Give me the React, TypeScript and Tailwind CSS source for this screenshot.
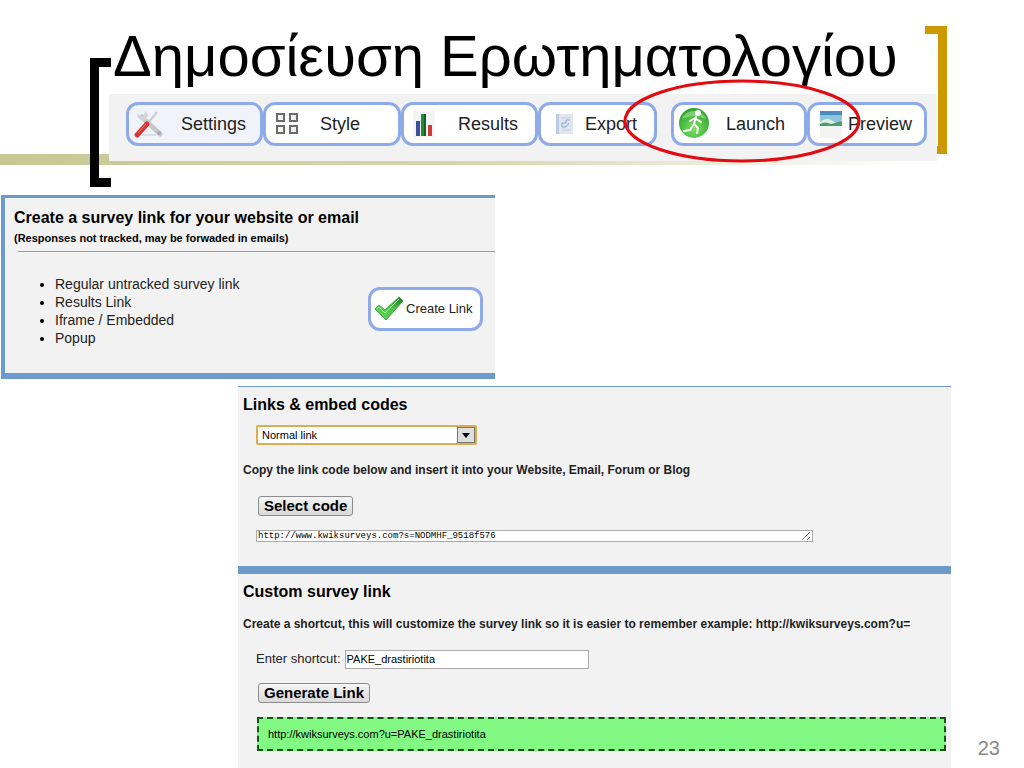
import type { ReactNode } from "react";

const tabs = [
  { label: "Settings", icon: <ToolsIcon />, className: "w-[137px] pl-1 gap-4 bg-[#f0f4fa]" },
  { label: "Style", icon: <GridIcon />, className: "w-[138px] pl-2 gap-5 bg-white" },
  { label: "Results", icon: <ChartIcon />, className: "w-[137px] pl-2 gap-5 bg-white" },
  { label: "Export", icon: <SheetIcon />, className: "w-[119px] pl-3 gap-2 bg-white" },
  { label: "Launch", icon: <RunnerIcon />, className: "ml-[14px] w-[136px] pl-1 gap-4 bg-white" },
  { label: "Preview", icon: <PictureIcon />, className: "w-[120px] pl-2 gap-1 bg-white" },
];

const linkTypes = ["Regular untracked survey link", "Results Link", "Iframe / Embedded", "Popup"];

function ToolsIcon() {
  return (
    <svg width="32" height="30" viewBox="0 0 32 30" className="shrink-0">
      <path d="M9 26 L23 26" stroke="#dcdfe3" strokeWidth="2" />
      <path d="M24 3 L15 14" stroke="#c9ccd0" strokeWidth="2" />
      <path d="M9 8 L27 25" stroke="#c6c8cb" strokeWidth="5" strokeLinecap="round" />
      <path d="M4 4 L5 9 L9 12 L14 10 L15 5 L12 2 L11 7 L8 8 Z" fill="#d3d5d8" />
      <circle cx="26" cy="24" r="2" fill="#a9abae" />
      <path d="M14 15 L4 26" stroke="#d8342f" strokeWidth="5" strokeLinecap="round" />
      <path d="M13 15 L5 24" stroke="#ee8078" strokeWidth="1" />
    </svg>
  );
}

function GridIcon() {
  return (
    <svg width="26" height="24" viewBox="0 0 26 24" className="shrink-0" fill="#f3f3f3" stroke="#6b6b6b" strokeWidth="2">
      <rect x="3" y="2" width="7" height="7" />
      <rect x="16" y="2" width="7" height="7" />
      <rect x="3" y="14" width="7" height="7" />
      <rect x="16" y="14" width="7" height="7" />
    </svg>
  );
}

function ChartIcon() {
  return (
    <svg width="26" height="28" viewBox="0 0 26 28" className="shrink-0">
      <rect x="1" y="1" width="22" height="26" fill="#f3f4f6" />
      <rect x="4" y="11" width="4" height="15" fill="#3c4f9c" />
      <rect x="9" y="4" width="5" height="22" fill="#1c8f35" />
      <rect x="12" y="4" width="2" height="22" fill="#14602a" />
      <rect x="16" y="15" width="4" height="11" fill="#cf3a36" />
    </svg>
  );
}

function SheetIcon() {
  return (
    <svg width="24" height="24" viewBox="0 0 24 24" className="shrink-0">
      <rect x="3" y="2" width="17" height="20" fill="#dfe6f0" />
      <rect x="3" y="2" width="3" height="20" fill="#b9cbe4" />
      <path d="M8 6 H18 M8 18 H18" stroke="#c5cedb" strokeWidth="1" />
      <path d="M9 15 V11 H13 V8 H17 M9 15 H13 L16 11" stroke="#8fa6c9" strokeWidth="1" fill="none" />
    </svg>
  );
}

function RunnerIcon() {
  return (
    <svg width="32" height="32" viewBox="0 0 32 32" className="shrink-0">
      <defs>
        <radialGradient id="launch" cx="50%" cy="70%" r="65%">
          <stop offset="0" stopColor="#7ee064" />
          <stop offset="1" stopColor="#2fa52f" />
        </radialGradient>
      </defs>
      <circle cx="16" cy="15" r="15" fill="url(#launch)" />
      <path d="M4 11 A13 13 0 0 1 28 11 Q16 5 4 11 Z" fill="#a5e596" opacity="0.6" />
      <circle cx="20" cy="5" r="3" fill="#fff" />
      <path d="M18 9 L16 16 L20 20 L19 25 M16 16 L12 22 L6 23 M17 10 L12 13 M18 11 L23 14" stroke="#fff" strokeWidth="2" strokeLinecap="round" strokeLinejoin="round" fill="none" />
    </svg>
  );
}

function PictureIcon() {
  return (
    <svg width="26" height="30" viewBox="0 0 26 30" className="shrink-0">
      <rect x="2" y="2" width="22" height="27" fill="#f4f4f5" />
      <rect x="2" y="2" width="22" height="15" fill="#8fc3dc" />
      <rect x="2" y="2" width="22" height="4" fill="#4d8dbd" />
      <path d="M2 13 Q9 7 15 12 T24 10 V17 H2 Z" fill="#d9efdf" />
      <path d="M2 15 Q7 12 13 15 L24 12 V17 H2 Z" fill="#4f9c67" />
    </svg>
  );
}

function CheckIcon() {
  return (
    <svg width="30" height="26" viewBox="0 0 30 26" className="shrink-0">
      <defs>
        <linearGradient id="check" x1="0" y1="1" x2="1" y2="0">
          <stop offset="0" stopColor="#63da5c" />
          <stop offset="0.6" stopColor="#4cc04a" />
          <stop offset="1" stopColor="#1c6a22" />
        </linearGradient>
      </defs>
      <path d="M1 13 L5 9 L11 14 L25 1 L29 5 L12 24 Z" fill="url(#check)" stroke="#3fa443" strokeWidth="1" strokeLinejoin="round" />
      <path d="M3 13 L5 11 L11 17 L25 3" stroke="#a6ee9c" strokeWidth="1" fill="none" />
    </svg>
  );
}

function GrayButton({ children }: { children: ReactNode }) {
  return (
    <button
      type="button"
      className="h-5 rounded-[3px] border border-[#8c8c8c] bg-linear-to-b from-[#f6f6f6] to-[#d9d9d9] px-[5px] text-[15px] leading-4 font-bold"
    >
      {children}
    </button>
  );
}

function Toolbar() {
  return (
    <nav className="relative mt-[6px] mr-[87px] ml-[109px] flex h-[67px] bg-[#f2f2f2] pt-2 pl-[17px]">
      {tabs.map((tab) => (
        <button
          key={tab.label}
          type="button"
          className={`flex h-11 shrink-0 items-center rounded-xl border-3 border-[#8eaae8] text-[18px] text-[#222] ${tab.className}`}
        >
          {tab.icon}
          {tab.label}
        </button>
      ))}
      {/* highlight ring around Launch */}
      <svg width="238" height="86" viewBox="0 0 238 86" className="pointer-events-none absolute -top-4 left-[514px]">
        <ellipse cx="119" cy="43" rx="117" ry="40" fill="none" stroke="#e30a10" strokeWidth="3" />
      </svg>
    </nav>
  );
}

function SlideHeader() {
  return (
    <header className="relative pt-6">
      <div className="absolute top-[154px] left-0 h-[11px] w-[90%] bg-linear-to-r from-[#c8c893] via-[#d6d6ae] to-white" />
      <div className="absolute top-[58px] left-[90px] h-[129px] w-[21px] border-y-9 border-l-9 border-black" />
      <div className="absolute top-[26px] right-[77px] h-[128px] w-[22px] border-y-8 border-r-9 border-[#cc9900]" />
      <h1 className="relative pl-[113px] text-[58px] leading-[64px] whitespace-nowrap">Δημοσίευση Ερωτηματολογίου</h1>
      <Toolbar />
    </header>
  );
}

function CreateLinkPanel() {
  return (
    <section className="mt-[34px] ml-px w-[494px] border-t-3 border-b-6 border-l-4 border-[#6b9acb] bg-[#f2f2f2] pt-[10px] pb-[26px] pl-[9px]">
      <h2 className="text-[16px] leading-5 font-bold">Create a survey link for your website or email</h2>
      <p className="text-[11px] leading-5 font-bold">(Responses not tracked, may be forwaded in emails)</p>
      <hr className="mt-[3px] ml-1 border-[#999]" />
      <div className="mt-[23px] flex items-start justify-between pr-3">
        <ul className="list-disc pl-[41px] text-[14px] leading-[18px] text-[#222] marker:text-black">
          {linkTypes.map((type) => (
            <li key={type}>{type}</li>
          ))}
        </ul>
        <button
          type="button"
          className="mt-3 flex h-11 w-[115px] items-center gap-[2px] rounded-xl border-3 border-[#8eaae8] bg-white pl-[3px] text-[13px] whitespace-nowrap text-[#222]"
        >
          <CheckIcon />
          Create Link
        </button>
      </div>
    </section>
  );
}

function EmbedCodes() {
  return (
    <div className="border-t border-[#6b9acb] pt-2 pb-6 pl-[5px]">
      <h2 className="text-[16px] leading-5 font-bold">Links &amp; embed codes</h2>
      <div className="relative mt-[10px] ml-[13px] w-[221px]">
        <select
          aria-label="Link type"
          className="block h-5 w-full appearance-none rounded-xs border-2 border-[#dcae50] bg-white pl-1 text-[11px] leading-4"
        >
          <option>Normal link</option>
        </select>
        <span className="pointer-events-none absolute top-[2px] right-[2px] flex h-4 w-[18px] items-center justify-center border border-[#777] bg-[#dedede]">
          <svg width="8" height="5" viewBox="0 0 8 5">
            <path d="M0 0 H8 L4 5 Z" />
          </svg>
        </span>
      </div>
      <p className="mt-[15px] text-[12px] leading-5 font-bold text-[#222]">
        Copy the link code below and insert it into your Website, Email, Forum or Blog
      </p>
      <div className="mt-4 ml-[15px] flex">
        <GrayButton>Select code</GrayButton>
      </div>
      <div className="relative mt-[14px] ml-[13px] w-[557px]">
        <textarea
          aria-label="Link code"
          rows={1}
          defaultValue="http://www.kwiksurveys.com?s=NODMHF_9518f576"
          className="block h-3 w-full resize-none overflow-hidden border border-[#aaa] bg-white pl-px font-['Liberation_Mono',monospace] text-[9px] leading-[10px]"
        />
        <svg width="9" height="9" viewBox="0 0 9 9" className="pointer-events-none absolute right-[2px] bottom-[2px]">
          <path d="M0 9 L8 1 M5 9 L8 6" stroke="#777" strokeWidth="1" />
        </svg>
      </div>
    </div>
  );
}

function CustomLink() {
  return (
    <div className="border-t-8 border-[#6b9acb] pt-2 pb-[19px] pl-[5px]">
      <h2 className="text-[16px] leading-5 font-bold">Custom survey link</h2>
      <p className="mt-3 overflow-hidden text-[12px] leading-5 font-bold whitespace-nowrap text-[#222]">
        Create a shortcut, this will customize the survey link so it is easier to remember example: http://kwiksurveys.com?u=
      </p>
      <div className="mt-[15px] ml-[13px] flex items-center gap-1">
        <label htmlFor="shortcut" className="text-[13px] leading-5 text-[#222]">
          Enter shortcut:
        </label>
        <input
          id="shortcut"
          defaultValue="PAKE_drastiriotita"
          className="h-[19px] w-[244px] border border-[#aaa] bg-white px-px text-[11px]"
        />
      </div>
      <div className="mt-[14px] ml-[15px] flex">
        <GrayButton>Generate Link</GrayButton>
      </div>
      <p className="mt-[14px] mr-[5px] ml-[14px] border-2 border-dashed border-[#17521a] bg-[#82f982] py-[5px] pl-[9px] text-[11px] leading-5">
        http://kwiksurveys.com?u=PAKE_drastiriotita
      </p>
    </div>
  );
}

export default function App() {
  return (
    <main className="flex min-h-screen flex-col overflow-hidden bg-white font-['Liberation_Sans',Arial,sans-serif] text-black">
      <SlideHeader />
      <CreateLinkPanel />
      <div className="mt-[7px] flex grow">
        <section className="ml-[238px] min-w-0 grow bg-[#f2f2f2]">
          <EmbedCodes />
          <CustomLink />
        </section>
        <footer className="w-[73px] shrink-0 self-end pr-6 pb-2 text-right text-[20px] leading-7 text-[#898989]">23</footer>
      </div>
    </main>
  );
}
